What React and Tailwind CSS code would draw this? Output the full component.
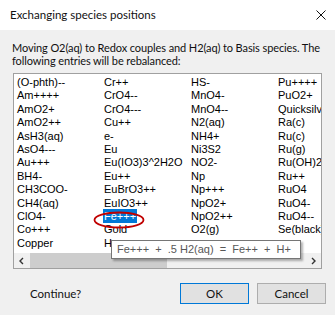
import React from 'react';

const columns = [
    ['(O-phth)--', 'Am++++', 'AmO2+', 'AmO2++', 'AsH3(aq)', 'AsO4---', 'Au+++', 'BH4-', 'CH3COO-', 'CH4(aq)', 'ClO4-', 'Co+++', 'Copper'],
    ['Cr++', 'CrO4--', 'CrO4---', 'Cu++', 'e-', 'Eu', 'Eu(IO3)3^2H2O', 'Eu++', 'EuBrO3++', 'EuIO3++', 'Fe+++', 'Gold', 'H'],
    ['HS-', 'MnO4-', 'MnO4--', 'N2(aq)', 'NH4+', 'Ni3S2', 'NO2-', 'Np', 'Np+++', 'NpO2+', 'NpO2++', 'O2(g)', ''],
    ['Pu++++', 'PuO2+', 'Quicksilver', 'Ra(c)', 'Ru(c)', 'Ru(g)', 'Ru(OH)2++', 'Ru++', 'RuO4', 'RuO4-', 'RuO4--', 'Se(black)', ''],
];

const uiFont = { fontFamily: 'Lato, "Noto Sans", sans-serif' };
const listFont = { fontFamily: '"Liberation Sans", Arial, sans-serif' };

const Chevron = ({ dir }) => (
    <svg width="8" height="8" viewBox="0 0 8 8">
        <polyline
            points={dir === 'left' ? '5,1 2,4 5,7' : '3,1 6,4 3,7'}
            fill="none"
            stroke="#333"
            strokeWidth="1.4"
        />
    </svg>
);

export default function App() {
    return (
        <div className="relative w-[335px] h-[315px] bg-[#f0f0f0] overflow-hidden text-[#111]" style={uiFont}>
            {/* title bar */}
            <div className="h-[30px] bg-white flex items-center justify-between pl-[10px] pr-[9px]">
                <span className="text-[11.5px]">Exchanging species positions</span>
                <svg width="10" height="10" viewBox="0 0 10 10">
                    <path d="M0.5 0.5 L9.5 9.5 M9.5 0.5 L0.5 9.5" stroke="#111" strokeWidth="1" />
                </svg>
            </div>

            {/* message */}
            <div className="px-[12px] pt-[11px] text-[11px] leading-[13px] tracking-[-0.1px]">
                <div className="whitespace-nowrap">Moving O2(aq) to Redox couples and H2(aq) to Basis species. The</div>
                <div>following entries will be rebalanced:</div>
            </div>

            {/* list box */}
            <div className="ml-[13px] mt-[6px] w-[309px] h-[196px] border border-[#a0a0a0] bg-white flex flex-col overflow-hidden">
                <div className="flex-1 flex pl-[3px] pt-[2px] overflow-hidden text-[11px] text-black" style={listFont}>
                    {columns.map((col, ci) => (
                        <div key={ci} className="w-[87px] shrink-0 flex flex-col">
                            {col.map((item, ri) => (
                                <div key={ri} className="h-[13.4px] leading-[13.4px] whitespace-nowrap">
                                    {item === 'Fe+++' ? (
                                        <span className="bg-[#0078d7] text-white px-px -ml-px py-px">{item}</span>
                                    ) : (
                                        item
                                    )}
                                </div>
                            ))}
                        </div>
                    ))}
                </div>
                {/* horizontal scrollbar */}
                <div className="h-[15px] flex bg-[#f0f0f0]">
                    <div className="w-[16px] flex items-center justify-center">
                        <Chevron dir="left" />
                    </div>
                    <div className="w-[137px] bg-[#cdcdcd]" />
                    <div className="flex-1" />
                    <div className="w-[16px] flex items-center justify-center">
                        <Chevron dir="right" />
                    </div>
                </div>
            </div>

            {/* bottom row */}
            <div className="flex items-center mt-[14px] pl-[30px] text-[11.5px]">
                <span>Continue?</span>
                <button className="ml-auto w-[69px] h-[21px] bg-[#e1e1e1] border border-[#0078d7]">OK</button>
                <button className="ml-[8px] mr-[9px] w-[69px] h-[21px] bg-[#e1e1e1] border border-[#adadad]">Cancel</button>
            </div>

            {/* red marker around selected entry */}
            <svg className="absolute left-[93px] top-[211px]" width="52" height="18" viewBox="0 0 52 18">
                <ellipse cx="26" cy="9" rx="24.5" ry="7.5" fill="none" stroke="#c00000" strokeWidth="1.8" />
            </svg>

            {/* tooltip */}
            <div className="absolute left-[111px] top-[240px] w-[190px] h-[19px] bg-white border border-[#767676] shadow-[2px_2px_2px_rgba(0,0,0,0.3)] flex items-center pl-[5px] text-[11px] text-[#575757] whitespace-pre" style={listFont}>
                {'Fe+++  +  .5 H2(aq)  =  Fe++  +  H+'}
            </div>
        </div>
    );
}
